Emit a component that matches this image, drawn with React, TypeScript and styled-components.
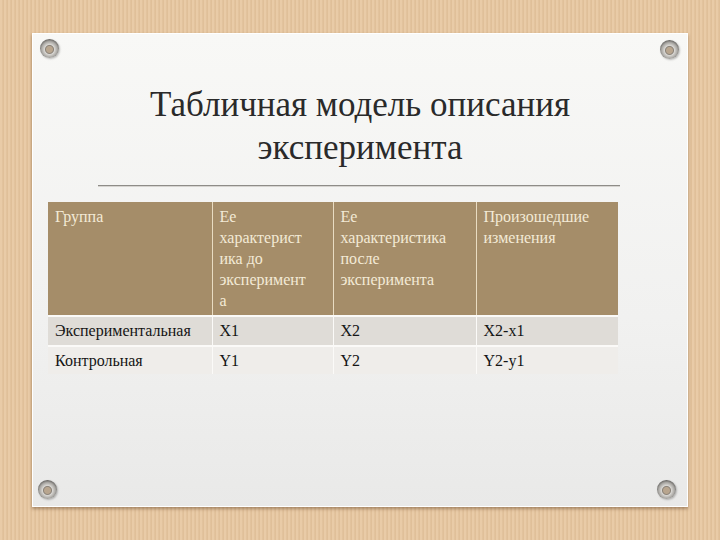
import React from 'react';
import styled, { createGlobalStyle } from 'styled-components';

const GlobalStyle = createGlobalStyle`
  html, body {
    margin: 0;
    padding: 0;
  }
  body {
    font-family: "Liberation Serif", "DejaVu Serif", serif;
  }
`;

const Board = styled.div`
  width: 720px;
  height: 540px;
  box-sizing: border-box;
  padding: 33px 32px 33px 32px;
  background-color: #e6c7a1;
  background-image: repeating-linear-gradient(
    90deg,
    #e9cba7 0px,
    #e9cba7 2px,
    #dcbb94 3px,
    #e4c49e 4px
  );
`;

const Paper = styled.div`
  position: relative;
  height: 474px;
  box-sizing: border-box;
  padding: 50px 16px 0 16px;
  background: linear-gradient(180deg, #f8f8f6 0%, #f1f1f0 60%, #e9e9e8 100%);
  box-shadow: 0 2px 3px rgba(90, 60, 30, 0.45), inset 0 0 0 1px #ffffff;
  display: flex;
  flex-direction: column;
`;

const Screw = styled.div<{ $top?: number; $bottom?: number; $left?: number; $right?: number }>`
  position: absolute;
  width: 19px;
  height: 19px;
  border-radius: 50%;
  ${(p) => (p.$top !== undefined ? `top: ${p.$top}px;` : '')}
  ${(p) => (p.$bottom !== undefined ? `bottom: ${p.$bottom}px;` : '')}
  ${(p) => (p.$left !== undefined ? `left: ${p.$left}px;` : '')}
  ${(p) => (p.$right !== undefined ? `right: ${p.$right}px;` : '')}
  background: radial-gradient(circle at 50% 55%, #b8a58e 0 3px, #8a8278 4px, #d8d6d2 5px, #a8a6a2 8px, #6e6c69 10px);
  box-shadow: 1px 1px 2px rgba(0, 0, 0, 0.25);
`;

const Title = styled.h1`
  margin: 0;
  font-family: "Liberation Serif", "DejaVu Serif", serif;
  font-weight: normal;
  font-size: 35px;
  line-height: 43px;
  text-align: center;
  color: #2a2a2a;
`;

const Rule = styled.div`
  margin: 16px 52px 16px 50px;
  height: 1px;
  background: #8e8c88;
  box-shadow: 0 1px 0 #d6d4d0;
`;

const Table = styled.table`
  width: 570px;
  border-collapse: collapse;
  table-layout: fixed;
  font-family: "Liberation Serif", "DejaVu Serif", serif;
  font-size: 16px;
  line-height: 21px;
`;

const HeadCell = styled.th<{ $w: number }>`
  width: ${(p) => p.$w}px;
  box-sizing: border-box;
  padding: 4px 6px 4px 7px;
  height: 113px;
  vertical-align: top;
  text-align: left;
  font-weight: normal;
  white-space: nowrap;
  overflow: hidden;
  color: #f3ead6;
  background: #a58d69;
  border-right: 1px solid #e9dcc2;
  &:last-child {
    border-right: none;
  }
`;

const Row = styled.tr<{ $shade: string; $h: number }>`
  height: ${(p) => p.$h}px;
  background: ${(p) => p.$shade};
  border-top: 2px solid #fbfaf8;
`;

const Cell = styled.td`
  padding: 3px 6px 0 7px;
  vertical-align: top;
  white-space: nowrap;
  color: #151515;
  border-right: 1px solid #fbfaf8;
  &:last-child {
    border-right: none;
  }
`;

const widths = [164, 121, 143, 142];

const headLines: string[][] = [
  ['Группа'],
  ['Ее', 'характерист', 'ика до', 'эксперимент', 'а'],
  ['Ее', 'характеристика', 'после', 'эксперимента'],
  ['Произошедшие', 'изменения'],
];

const rows = [
  { shade: '#dfdcd7', h: 30, cells: ['Экспериментальная', 'X1', 'X2', 'X2-x1'] },
  { shade: '#efedea', h: 28, cells: ['Контрольная', 'Y1', 'Y2', 'Y2-y1'] },
];

export default function App() {
  return (
    <>
      <GlobalStyle />
      <Board>
        <Paper>
          <Screw $top={6} $left={8} />
          <Screw $top={7} $right={9} />
          <Screw $bottom={8} $left={6} />
          <Screw $bottom={8} $right={12} />
          <Title>
            Табличная модель описания
            <br />
            эксперимента
          </Title>
          <Rule />
          <Table>
            <thead>
              <tr>
                {headLines.map((lines, i) => (
                  <HeadCell key={i} $w={widths[i]}>
                    {lines.map((l, j) => (
                      <React.Fragment key={j}>
                        {l}
                        {j < lines.length - 1 && <br />}
                      </React.Fragment>
                    ))}
                  </HeadCell>
                ))}
              </tr>
            </thead>
            <tbody>
              {rows.map((r, i) => (
                <Row key={i} $shade={r.shade} $h={r.h}>
                  {r.cells.map((c, j) => (
                    <Cell key={j}>{c}</Cell>
                  ))}
                </Row>
              ))}
            </tbody>
          </Table>
        </Paper>
      </Board>
    </>
  );
}
